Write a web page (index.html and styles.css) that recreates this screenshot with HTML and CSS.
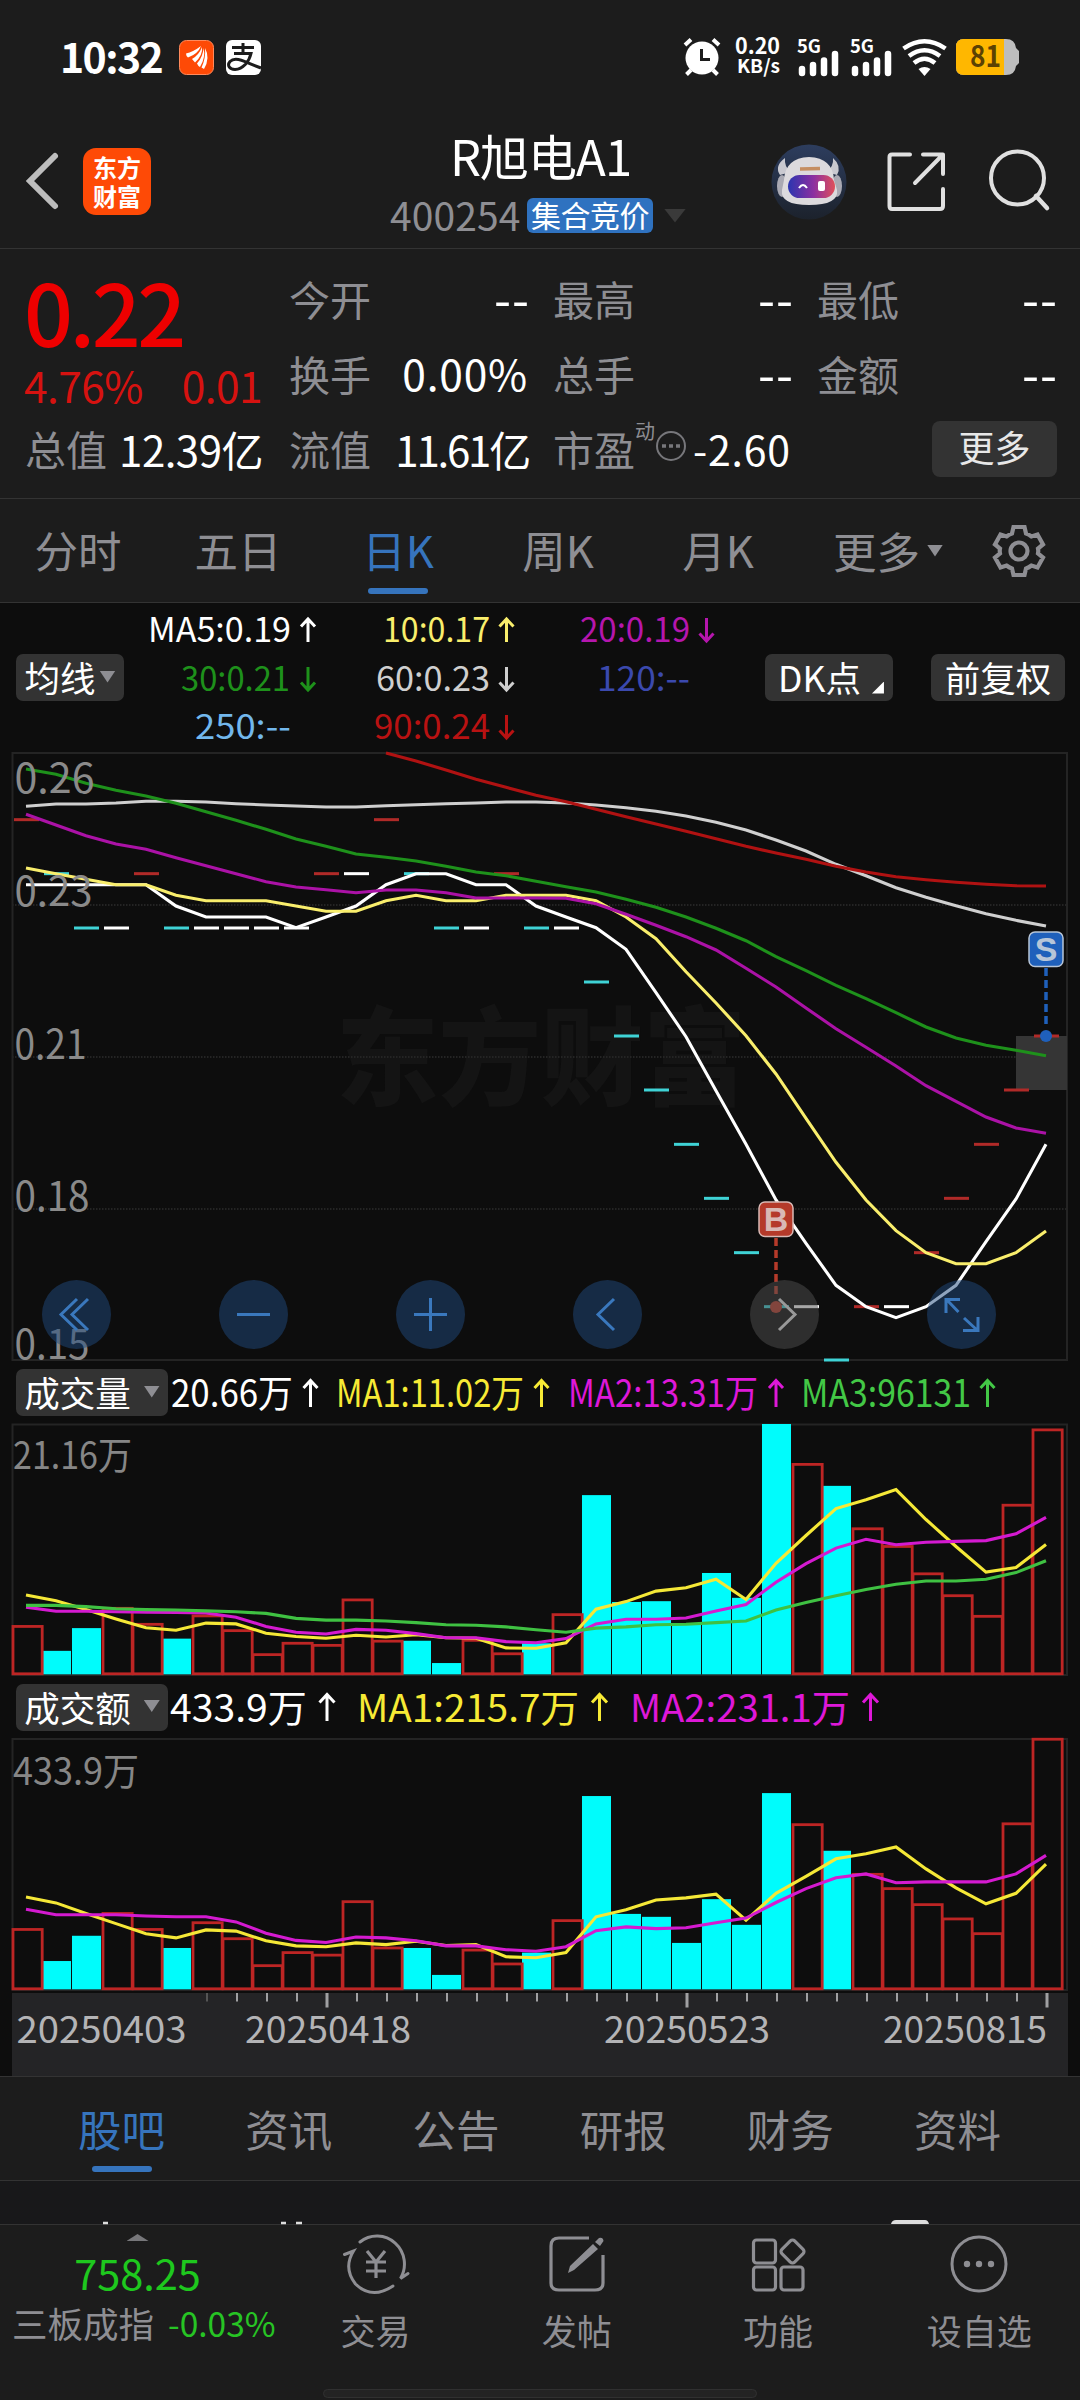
FILE: index.html
```html
<!DOCTYPE html>
<html lang="zh-CN">
<head>
<meta charset="utf-8">
<title>R旭电A1 400254</title>
<link rel="stylesheet" href="styles.css">
</head>
<body>
<div class="app">
  <div class="status">
    <span class="clock">10:32</span>
    <svg class="st-app" width="35" height="35" viewBox="0 0 35 35"><rect x=".5" y=".5" width="34" height="34" rx="7" fill="#fe4a06" stroke="#ff8a5c"/><path d="M7 13.500Q14 12 22 6Q19 14 9 17.500Q7 16 7 13.500ZM13 19Q20 15 23 7Q24 15 16 22.500ZM18 23.500Q24 17 24.500 8Q27 17 21 27Q19 26 18 23.500ZM22.500 27.500Q27 18 26 8Q31.500 18 25 29Z" fill="#fff"/></svg>
    <svg class="st-pay" width="35" height="35" viewBox="0 0 35 35"><rect width="35" height="35" rx="6" fill="#fff"/><g fill="none" stroke="#1c1c1c" stroke-width="3"><path d="M6 7.500H28M17 3V14M8 13.500H25C23 22 17 29 9 29.500C3 29.500 1 25 4 21.500C8 17.500 16 20 22 23L35 28"/></g></svg>
    <svg class="st-alarm" width="38" height="38" viewBox="0 0 38 38"><circle cx="19" cy="20" r="16.500" fill="#fff"/><path d="M2 7L8 1.500M36 7L30 1.500M8 32L3.500 36.500M30 32L34.500 36.500" stroke="#fff" stroke-width="4"/><path d="M18.500 11V21.500H27" fill="none" stroke="#1c1c1c" stroke-width="3"/></svg>
    <svg class="net" width="46" height="40" viewBox="0 0 46 40"><text x="0" y="17" font-size="22" textLength="45" lengthAdjust="spacingAndGlyphs">0.20</text><text x="2" y="36" font-size="19" textLength="43" lengthAdjust="spacingAndGlyphs">KB/s</text></svg>
    <svg class="st-sig" width="42" height="37" viewBox="0 0 42 37"><text x="0" y="13.500" textLength="24" lengthAdjust="spacingAndGlyphs">5G</text><path d="M5 30V34M16 26V34M27 21.500V34M38 15V34" stroke="#fff" stroke-width="6.500" stroke-linecap="round"/></svg>
    <svg class="st-sig2" width="42" height="37" viewBox="0 0 42 37"><text x="0" y="13.500" textLength="24" lengthAdjust="spacingAndGlyphs">5G</text><path d="M5 30V34M16 26V34M27 21.500V34M38 15V34" stroke="#fff" stroke-width="6.500" stroke-linecap="round"/></svg>
    <svg class="st-wifi" width="45" height="37" viewBox="0 0 45 37"><g fill="none" stroke="#fff" stroke-width="4.500"><path d="M1.500 9.500Q22.500-5 43.500 9.500M7 17Q22.500 5.500 38 17M12 24Q22.500 15.500 33 24"/></g><path d="M16.500 30Q22.500 26 28.500 30L22.500 37Z" fill="#fff"/></svg>
    <svg class="st-bat" width="64" height="36" viewBox="0 0 64 36"><path d="M8 0H50Q59 0 60 9L63 12V24L60 27Q59 36 50 36H8Q0 36 0 28V8Q0 0 8 0Z" fill="#bdbdbd"/><path d="M8 0H48V36H8Q0 36 0 28V8Q0 0 8 0Z" fill="#ffb700"/><text x="14" y="28" textLength="31" lengthAdjust="spacingAndGlyphs">81</text></svg>
  </div>

  <header class="head">
    <svg class="back" width="34" height="58" viewBox="0 0 34 58"><path d="M29 4L4 29L29 54" fill="none" stroke="#bdbdbd" stroke-width="6" stroke-linecap="round"/></svg>
    <div class="logo"><span>东方</span><span>财富</span></div>
    <div class="title">
      <div class="name">R旭电A1</div>
      <div class="code"><span>400254</span><b>集合竞价</b><i class="tri"></i></div>
    </div>
    <svg class="robot" width="76" height="76" viewBox="0 0 76 76">
      <defs><linearGradient id="sky" x1="0" y1="0" x2="0" y2="1"><stop offset="0" stop-color="#2d3d5e"/><stop offset="1" stop-color="#1c222c"/></linearGradient><linearGradient id="visor"><stop offset="0" stop-color="#2b35b0"/><stop offset=".55" stop-color="#8d2fa0"/><stop offset="1" stop-color="#e0505a"/></linearGradient></defs>
      <circle cx="38" cy="38" r="37.500" fill="url(#sky)"/>
      <path d="M14 14Q3 22 9 31L20 28Q13 23 14 14ZM62 14Q71 22 66 31L55 28Q63 23 62 14Z" fill="#c9c9d0"/>
      <ellipse cx="11" cy="42" rx="5" ry="11" fill="#a9a9b3"/><ellipse cx="66" cy="42" rx="5" ry="11" fill="#a9a9b3"/>
      <path d="M13 36Q14 14 38 13Q62 14 63 36L66 46Q68 61 38 61Q9 61 11 46Z" fill="#dcdadd"/>
      <path d="M29 25L49 24.500" stroke="#c58e62" stroke-width="3.500"/>
      <rect x="17" y="31" width="47" height="23" rx="11.500" fill="url(#visor)"/>
      <path d="M28 44Q32 38 36 44" fill="none" stroke="#fff" stroke-width="2"/><rect x="47" y="37" width="7" height="10" rx="2" fill="#fff"/>
    </svg>
    <svg class="share" width="60" height="62" viewBox="0 0 60 62"><path d="M24 4.500H6Q3.500 4.500 3.500 7V56Q3.500 59 6 59H54Q57 59 57 56V39M37 4.500H57V24M56 5.500L29 33" fill="none" stroke="#e0e0e0" stroke-width="4" stroke-linecap="round" stroke-linejoin="round"/></svg>
    <svg class="search" width="62" height="64" viewBox="0 0 62 64"><circle cx="29.500" cy="29" r="26.500" fill="none" stroke="#e0e0e0" stroke-width="4"/><path d="M48 47L59 59" stroke="#e0e0e0" stroke-width="4.500" stroke-linecap="round"/></svg>
  </header>

  <section class="quote">
    <div class="price">
      <div class="last">0.22</div>
      <div class="chg"><span>4.76%</span><span>0.01</span></div>
    </div>
    <div class="kv"><span>今开</span><em class="nil">--</em></div>
    <div class="kv"><span>最高</span><em class="nil">--</em></div>
    <div class="kv"><span>最低</span><em class="nil">--</em></div>
    <div class="kv"><span>换手</span><em class="pct">0.00%</em></div>
    <div class="kv"><span>总手</span><em class="nil">--</em></div>
    <div class="kv"><span>金额</span><em class="nil">--</em></div>
    <div class="kv"><span>总值</span><em>12.39亿</em></div>
    <div class="kv"><span>流值</span><em class="float">11.61亿</em></div>
    <div class="kv pe"><span>市盈</span><small>动</small><svg width="32" height="32" viewBox="0 0 32 32"><circle cx="16" cy="16" r="14" fill="none" stroke="#77777b" stroke-width="2"/><path d="M7 16h4M14 16h4M21 16h4" stroke="#77777b" stroke-width="3.500"/></svg><em>-2.60</em></div>
    <div class="kv end"><span class="more">更多</span></div>
  </section>

  <nav class="tabs">
    <span>分时</span><span>五日</span><span class="on">日K</span><span>周K</span><span>月K</span><span class="drop">更多<i class="tri"></i></span>
    <svg width="54" height="54" viewBox="0 0 54 54"><g fill="none" stroke="#8e8e93" stroke-width="4.200"><path d="M21.500 3H32.500L34 9.500Q37 10.500 39.500 12.500L45.500 10.500L51 20.500L46 24.500Q46.500 27 46 29.500L51 33.500L45.500 43.500L39.500 41.500Q37 43.500 34 44.500L32.500 51H21.500L20 44.500Q17 43.500 14.500 41.500L8.500 43.500L3 33.500L8 29.500Q7.500 27 8 24.500L3 20.500L8.500 10.500L14.500 12.500Q17 10.500 20 9.500Z"/><circle cx="27" cy="27" r="8.500"/></g></svg>
  </nav>

  <main class="chart">
    <div class="legend top">
      <span class="pill avg">均线<i class="tri"></i></span>
      <svg class="ma" width="600" height="150" viewBox="140 603 600 150">
        <g fill="#fff"><text x="148" y="642" textLength="143" lengthAdjust="spacingAndGlyphs">MA5:0.19</text><path class="up" d="M308 642V619M301 626.500L308 619L315 626.500" stroke="#fff"/></g>
        <g fill="#f9ee6c"><text x="383" y="642" textLength="107" lengthAdjust="spacingAndGlyphs">10:0.17</text><path class="up" d="M506.500 642V619M499.500 626.500L506.500 619L513.500 626.500" stroke="#f9ee6c"/></g>
        <g fill="#b516ad"><text x="580" y="642" textLength="110" lengthAdjust="spacingAndGlyphs">20:0.19</text><path class="up" d="M706.500 618V641M699.500 633.500L706.500 641L713.500 633.500" stroke="#b516ad"/></g>
        <g fill="#1e911b"><text x="181" y="691" textLength="109" lengthAdjust="spacingAndGlyphs">30:0.21</text><path class="up" d="M308 667V690M301 682.500L308 690L315 682.500" stroke="#1e911b"/></g>
        <g fill="#cfcfcf"><text x="376" y="691" textLength="114" lengthAdjust="spacingAndGlyphs">60:0.23</text><path class="up" d="M506.500 667V690M499.500 682.500L506.500 690L513.500 682.500" stroke="#cfcfcf"/></g>
        <g fill="#3b49ae"><text x="597" y="691" textLength="93" lengthAdjust="spacingAndGlyphs">120:--</text></g>
        <g fill="#72b7ec"><text x="195" y="739" textLength="96" lengthAdjust="spacingAndGlyphs">250:--</text></g>
        <g fill="#b81212"><text x="374" y="739" textLength="116" lengthAdjust="spacingAndGlyphs">90:0.24</text><path class="up" d="M506.500 715V738M499.500 730.500L506.500 738L513.500 730.500" stroke="#b81212"/></g>
      </svg>
      <span class="pill dk">DK点<i class="corner"></i></span>
      <span class="pill adj">前复权</span>
    </div>

    <div class="kwrap">
      <svg id="kline" width="1056" height="609" viewBox="12 752 1056 609">
        <text class="mark" x="336" y="1097" textLength="410" lengthAdjust="spacingAndGlyphs">东方财富</text>
        <rect x="12.500" y="753" width="1054.500" height="607" fill="none" stroke="#242424" stroke-width="2"/>
        <path d="M12 905H1067M12 1057H1067M12 1209H1067" stroke="#242424" stroke-width="2" stroke-dasharray="1.500 1.500"/>
        <rect x="1016" y="1036" width="51" height="54" fill="#353535"/>
      </svg>
      <div class="tools">
        <span><svg viewBox="0 0 69 69"><path d="M35 19L19 34.500L35 50M46 19L30 34.500L46 50"/></svg></span>
        <span><svg viewBox="0 0 69 69"><path d="M18 34.500H51"/></svg></span>
        <span><svg viewBox="0 0 69 69"><path d="M18 34.500H51M34.500 18V51"/></svg></span>
        <span><svg viewBox="0 0 69 69"><path d="M41 19L25 34.500L41 50"/></svg></span>
        <span class="off"><svg viewBox="0 0 69 69"><path d="M29 19L45 34.500L29 50"/></svg></span>
        <span><svg viewBox="0 0 69 69"><path d="M19 33V19.500H33M20 20L31.500 32M51 37V50.500H36M50 50L37 38"/></svg></span>
      </div>
    </div>

    <div class="legend">
      <span class="pill ind">成交量<i class="tri"></i></span>
      <svg class="vl" width="892" height="63" viewBox="168 1361 892 63">
        <g fill="#fff"><text x="171" y="1407" textLength="122" lengthAdjust="spacingAndGlyphs">20.66万</text><path class="up" d="M310.500 1407V1381M303.500 1388L310.500 1380.500L317.500 1388" stroke="#fff"/></g>
        <g fill="#f7ea35"><text x="336" y="1407" textLength="188" lengthAdjust="spacingAndGlyphs">MA1:11.02万</text><path class="up" d="M541.500 1407V1381M534.500 1388L541.500 1380.500L548.500 1388" stroke="#f7ea35"/></g>
        <g fill="#de18d8"><text x="568" y="1407" textLength="190" lengthAdjust="spacingAndGlyphs">MA2:13.31万</text><path class="up" d="M776 1407V1381M769 1388L776 1380.500L783 1388" stroke="#de18d8"/></g>
        <g fill="#43c846"><text x="801" y="1407" textLength="170" lengthAdjust="spacingAndGlyphs">MA3:96131</text><path class="up" d="M987.500 1407V1381M980.500 1388L987.500 1380.500L994.500 1388" stroke="#43c846"/></g>
      </svg>
    </div>
    <svg id="volume" width="1056" height="252" viewBox="12 1424 1056 252">
      <rect x="12.500" y="1424.500" width="1054.500" height="250.500" fill="none" stroke="#242424" stroke-width="2"/>
      <text class="lbl" x="13" y="1468.500" textLength="119" lengthAdjust="spacingAndGlyphs">21.16万</text>
    </svg>

    <div class="legend amt">
      <span class="pill ind">成交额<i class="tri"></i></span>
      <svg class="vl" width="892" height="62" viewBox="168 1676 892 62">
        <g fill="#fff"><text x="170" y="1721.500" textLength="137" lengthAdjust="spacingAndGlyphs">433.9万</text><path class="up" d="M327 1721V1695M319.500 1702.500L327 1694.500L334.500 1702.500" stroke="#fff"/></g>
        <g fill="#f7ea35"><text x="357" y="1721.500" textLength="222" lengthAdjust="spacingAndGlyphs">MA1:215.7万</text><path class="up" d="M599.500 1721V1695M592 1702.500L599.500 1694.500L607 1702.500" stroke="#f7ea35"/></g>
        <g fill="#de18d8"><text x="630" y="1721.500" textLength="220" lengthAdjust="spacingAndGlyphs">MA2:231.1万</text><path class="up" d="M870.500 1721V1695M863 1702.500L870.500 1694.500L878 1702.500" stroke="#de18d8"/></g>
      </svg>
    </div>
    <svg id="amount" width="1056" height="255" viewBox="12 1738 1056 255">
      <rect x="12.500" y="1739" width="1054.500" height="251" fill="none" stroke="#242424" stroke-width="2"/>
      <text class="lbl" x="13" y="1784.500" textLength="126" lengthAdjust="spacingAndGlyphs">433.9万</text>
    </svg>
    <svg id="axis" width="1056" height="83" viewBox="12 1993 1056 83">
      <rect x="12" y="1993" width="1056" height="83" fill="#242426"/>
      <g class="date"><text x="16.500" y="2042.500" textLength="170" lengthAdjust="spacingAndGlyphs">20250403</text><text x="245" y="2042.500" textLength="166" lengthAdjust="spacingAndGlyphs">20250418</text><text x="604" y="2042.500" textLength="166" lengthAdjust="spacingAndGlyphs">20250523</text><text x="883" y="2042.500" textLength="164" lengthAdjust="spacingAndGlyphs">20250815</text></g>
    </svg>
  </main>

  <nav class="tabs info"><span class="on">股吧</span><span>资讯</span><span>公告</span><span>研报</span><span>财务</span><span>资料</span></nav>
  <div class="peek"><svg width="1080" height="43" viewBox="0 0 1080 43"><path d="M103 42H108M281 42H286M296 42H302" stroke="#ddd" stroke-width="2.500"/><path d="M891 43Q892 39 896 39H925Q928 39 929 43Z" fill="#ddd"/></svg></div>

  <footer class="dock">
    <div class="index">
      <i class="tri"></i>
      <strong>758.25</strong>
      <div><span>三板成指</span><em>-0.03%</em></div>
    </div>
    <div class="act"><svg width="68" height="64" viewBox="0 0 68 64"><g fill="none" stroke="#8e8e93" stroke-width="3" stroke-linecap="round"><path d="M18 10A27.500 28 0 0 1 58.500 46.500L66 41.500M2.500 22.500L11.500 19Q1 36 13.500 52Q30 68 51 54"/><path d="M25 19L34 30L43 19M34 30V46M24 30H44M24 39H44" stroke-linecap="butt" stroke-width="3.200"/></g></svg><span>交易</span></div>
    <div class="act"><svg width="68" height="64" viewBox="0 0 68 64"><path d="M46 6H16Q8 6 8 14V51Q8 58 16 58H52Q60 58 60 51V23" fill="none" stroke="#8e8e93" stroke-width="3.200"/><path d="M25 41L27 34L50 12L55 17L31 38ZM52 10L56 6Q60 5 60.500 9L57 14Z" fill="#8e8e93"/></svg><span>发帖</span></div>
    <div class="act"><svg width="68" height="64" viewBox="0 0 68 64"><g fill="none" stroke="#8e8e93" stroke-width="3.200"><rect x="9.500" y="8" width="22" height="23" rx="3"/><rect x="9.500" y="35" width="22" height="23" rx="3"/><rect x="37" y="35" width="22" height="23" rx="3"/><rect x="39.500" y="10.500" width="18" height="18" rx="3" transform="rotate(45 48.500 19.500)"/></g></svg><span>功能</span></div>
    <div class="act"><svg width="68" height="64" viewBox="0 0 68 64"><circle cx="34" cy="32" r="27" fill="none" stroke="#8e8e93" stroke-width="3"/><g fill="#8e8e93"><circle cx="22" cy="32" r="3.200"/><circle cx="34" cy="32" r="3.200"/><circle cx="46" cy="32" r="3.200"/></g></svg><span>设自选</span></div>
    <div class="home"></div>
  </footer>
</div>
<script src="chart.js"></script>
</body>
</html>
```
FILE: styles.css
```css
* { box-sizing: border-box; }
body { margin: 0; background: #1c1c1c; }
.app {
  width: 1080px; height: 2400px; overflow: hidden;
  display: flex; flex-direction: column;
  background: #1c1c1c; color: #fff;
  font-family: "Noto Sans CJK SC", "Noto Sans", sans-serif;
  line-height: 1; white-space: nowrap;
}
.app > * { flex: none; }
svg { display: block; flex: none; overflow: visible; }
em, i, b { font-style: normal; font-weight: 400; }
.tri {
  display: block; width: 16px; height: 12px; background: #8e8e93;
  clip-path: polygon(0 0, 100% 0, 50% 100%);
}

/* status bar */
.status { height: 114px; padding: 0 60px 0 60px; display: flex; align-items: center; }
.clock { width: 119px; padding-bottom: 4px; font-size: 41px; font-weight: 700; letter-spacing: -1.600px; }
.st-pay { margin-left: 12px; }
.st-alarm { margin-left: auto; }
.net { margin-left: 14px; }
.net text { font-weight: 700; fill: #fff; }
.st-sig { margin-left: 16px; }
.st-sig2 { margin-left: 11px; }
.st-sig text, .st-sig2 text { font-size: 18px; font-weight: 700; fill: #fff; }
.st-wifi { margin-left: 10px; }
.st-bat { margin-left: 9px; }
.st-bat text { font-size: 29px; font-weight: 700; fill: #5c4203; }

/* header */
.head {
  height: 135px; border-bottom: 1px solid #333; padding: 0 27px 0 26px;
  display: flex; align-items: flex-start;
}
.back { margin-top: 38px; }
.logo {
  margin: 34px 0 0 23px; width: 68px; height: 67px; border-radius: 13px; background: #fe4a06;
  display: flex; flex-direction: column; align-items: center; justify-content: center; gap: 3px;
  font-size: 24px; font-weight: 700; line-height: 26px;
}
.title { margin-left: 239px; width: 297px; }
.name { margin-top: 11px; padding-left: 60px; font-size: 49px; line-height: 60px; letter-spacing: -1px; }
.code { margin-top: 12px; display: flex; align-items: center; height: 37px; }
.code span { width: 137px; padding-bottom: 3px; color: #8e8e93; font-size: 39px; letter-spacing: .1px; }
.code b {
  width: 126px; height: 35px; border-radius: 6px; background: #2f72c0;
  font-size: 30px; line-height: 33px; text-align: center; letter-spacing: -.5px;
}
.code .tri { margin-left: 11px; width: 22px; height: 14px; background: #3a3a3a; }
.robot { margin: 30px 0 0 84px; }
.share { margin: 36px 0 0 39px; }
.search { margin: 35px 0 0 42px; }

/* quote grid */
.quote {
  height: 250px; border-bottom: 1px solid #333; padding: 12px 26px 13px;
  display: grid; grid-template-columns: repeat(4, 236px); grid-template-rows: repeat(3, 75px); column-gap: 28px;
}
.price { grid-row: span 2; color: #ee0000; }
.last { margin: 3px 0 0 -2px; font-size: 86px; font-weight: 500; line-height: 92px; letter-spacing: -3.500px; }
.chg { margin: 5px 0 0 -2px; display: flex; justify-content: space-between; color: #d61210; font-size: 42.500px; line-height: 48px; letter-spacing: -.6px; }
.kv { display: flex; align-items: center; justify-content: space-between; }
.kv span { margin-left: -1px; color: #8e8e93; font-size: 41px; }
.kv em { font-size: 42px; letter-spacing: -.5px; margin-right: -1px; }
.kv .nil { font-size: 49px; letter-spacing: 1px; padding-bottom: 4px; margin-right: -4px; }
.kv .pct { font-size: 42.500px; letter-spacing: .8px; margin-right: -2px; }
.kv .float { letter-spacing: -2.200px; margin-right: -3px; }
.kv.pe { justify-content: flex-start; }
.pe small { font-size: 20px; color: #8e8e93; align-self: flex-start; margin-top: 10px; }
.pe svg { margin: -6px 6px 0 0; }
.kv.pe em { font-size: 41px; letter-spacing: .8px; }
.kv.end { justify-content: flex-end; }
.kv .more {
  width: 125px; height: 56px; margin: 0 -3px 0 0; border-radius: 8px; background: #333;
  color: #e8e8e8; font-size: 36px; line-height: 51px; text-align: center;
}

/* tab rows */
.tabs { height: 104px; border-bottom: 1px solid #333; display: flex; align-items: center; color: #8e8e93; font-size: 43.500px; }
.tabs span { width: 160px; height: 103px; line-height: 101px; display: flex; justify-content: center; position: relative; left: -2px; }
.tabs .on { color: #3674bd; }
.tabs .on::after {
  content: ""; position: absolute; left: 50%; bottom: 8px; width: 60px; height: 6px; margin-left: -30px;
  border-radius: 3px; background: #3674bd;
}
.tabs .drop { width: 192px; align-items: center; justify-content: flex-start; gap: 7px; padding-left: 35px; }
.info { border-top: 1px solid #333; height: 105px; padding-left: 38px; }
.info span { width: 167.200px; line-height: 104px; left: 0; }

/* charts */
.chart { height: 1473px; padding: 0 12px; background: #0d0d0d; }
.legend { height: 63px; display: flex; align-items: center; padding-left: 4px; }
.legend.amt { height: 62px; }
.legend.top { height: 149px; }
.pill {
  flex: none; height: 47px; border-radius: 7px; background: #333; color: #fff;
  font-size: 35.500px; line-height: 43px; padding-bottom: 2px; display: flex; align-items: center; justify-content: center;
}
.avg { width: 108px; gap: 4px; }
.ma { margin-left: 16px; }
.dk { width: 128px; margin-left: 25px; gap: 11px; padding-left: 4px; }
.corner { width: 12px; height: 12px; margin-top: 22px; background: #fff; clip-path: polygon(100% 0, 100% 100%, 0 100%); }
.adj { width: 134px; margin-left: 38px; }
.ind { width: 152px; gap: 13px; }
.ma text { font-size: 34.500px; }
.vl text { font-size: 37.500px; }
.up { fill: none; stroke-width: 3; }
.kwrap { position: relative; height: 609px; }
.mark { font-size: 107px; font-weight: 900; fill: #141414; }
.axis-label { font-size: 41px; fill: #8a8a8a; }
.lbl { font-size: 38px; fill: #868686; }
.date text { font-size: 37px; fill: #b4b4b6; }
.tools { position: absolute; left: 30px; top: 528px; display: flex; gap: 108px; }
.tools span { width: 69px; height: 69px; border-radius: 50%; background: rgba(32, 74, 125, .5); }
.tools svg { width: 69px; height: 69px; fill: none; stroke: #3a78bd; stroke-width: 3; }
.tools .off { background: rgba(80, 80, 80, .5); }
.tools .off svg { stroke: #999; }

.peek { height: 44px; background: #18181a; border-bottom: 1px solid #333; }

/* bottom dock */
.dock { height: 175px; display: flex; position: relative; color: #8e8e93; }
.index { width: 275px; display: flex; flex-direction: column; align-items: center; padding-top: 9px; }
.index .tri { width: 22px; height: 7px; background: #77777a; clip-path: polygon(50% 0, 100% 100%, 0 100%); }
.index strong { margin-top: 7px; font-size: 41.500px; line-height: 48px; font-weight: 400; color: #1ec81e; }
.index div { margin-top: 8px; align-self: stretch; padding: 0 0 0 12px; display: flex; align-items: center; gap: 14px; font-size: 35.500px; line-height: 38px; }
.index em { color: #27c424; font-size: 33.500px; }
.act { width: 201.250px; display: flex; flex-direction: column; align-items: center; padding-top: 7px; }
.act span { margin-top: 16px; font-size: 35px; line-height: 36px; }
.home { position: absolute; left: 323px; bottom: 2px; width: 434px; height: 9px; border-radius: 5px; background: #232323; border: 1px solid #303030; }
```
FILE: chart.js
```js
const NS = "http://www.w3.org/2000/svg";
const STEP = 30;

function add(svg, tag, attrs, text) {
  const el = document.createElementNS(NS, tag);
  for (const k in attrs) el.setAttribute(k, attrs[k]);
  if (text) el.textContent = text;
  svg.appendChild(el);
  return el;
}

function line(svg, values, color, toY, first = 0) {
  const points = values.map((v, i) => (26 + STEP * (i + first)) + "," + toY(v).toFixed(1)).join(" ");
  add(svg, "polyline", { points, fill: "none", stroke: color, "stroke-width": 3.1 });
}

// Price panel
const k = document.getElementById("kline");
const priceY = v => 600 + v / 3;
const kinds = { R: "#b02a28", C: "#3fd3d6", W: "#ffffff" };
const closes = "R659 C821 C984 W984 R821 C984 W984 W984 W984 W984 R821 W821 R659 C821 C984 W984 R821 C984 W984 C1146 C1308 C1470 C1633 C1795 C1958 C2120 W2120 C2280 R2120 W2120 R1958 R1795 R1633 R1470 R1308".split(" ");
closes.forEach((c, i) => {
  add(k, "rect", { x: 14 + STEP * i, y: priceY(+c.slice(1)) - 1.5, width: 25, height: 3, fill: kinds[c[0]] });
});

line(k, [619,612,612,609,604,604,606,611,615,618,621,621,617,614,611,609,606,606,609,615,623,634,648,667,690,720,753,793,827,863,892,917,941,961,978], "#cfcfcf", priceY);
line(k, [854,854,854,854,854,918,951,951,951,983,951,918,854,821,821,854,854,918,951,983,1048,1178,1310,1472,1633,1800,1930,2056,2120,2153,2120,2056,1925,1797,1633], "#ffffff", priceY);
line(k, [804,821,838,854,854,886,902,902,902,918,934,934,902,886,902,902,886,886,886,902,951,1016,1115,1209,1307,1422,1555,1687,1800,1892,1958,1991,1991,1958,1893], "#f9ee6c", priceY);
line(k, [643,675,707,732,748,773,797,821,845,861,869,878,870,870,878,894,894,894,895,911,943,976,1010,1050,1105,1161,1224,1286,1342,1398,1457,1504,1551,1584,1600], "#ab12a6", priceY);
line(k, [507,523,550,571,588,610,635,661,688,717,739,762,772,783,799,816,827,844,860,876,898,922,951,985,1022,1070,1112,1156,1196,1238,1281,1314,1336,1351,1367], "#1e911b", priceY);
line(k, [459,483,510,538,562,586,605,628,650,672,694,716,739,759,778,799,816,830,839,847,853,857,858], "#b01212", priceY, 12);

[["0.26", 793, 80], ["0.23", 906, 78], ["0.21", 1059, 72], ["0.18", 1210.5, 75], ["0.15", 1359, 75]].forEach(([t, y, w]) => {
  add(k, "text", { x: 14.5, y, class: "axis-label", textLength: w, lengthAdjust: "spacingAndGlyphs" }, t);
});

function badge(letter, x, top, from, to, dot, fill, edge) {
  add(k, "path", { d: `M${x} ${from}V${to}`, stroke: fill, "stroke-width": 3.5, "stroke-dasharray": "8 4" });
  add(k, "circle", { cx: x, cy: dot, r: 6, fill });
  add(k, "rect", { x: x - 17, y: top, width: 34, height: 34.5, rx: 6, fill, stroke: edge, "stroke-width": 1.5 });
  add(k, "text", { x, y: top + 29, "text-anchor": "middle", "font-size": 34, "font-weight": 700, "font-family": "Liberation Sans, sans-serif", fill: edge }, letter);
}
badge("S", 1046, 932, 968, 1026, 1036, "#1f60bb", "#b7c5d8");
badge("B", 776, 1202, 1238, 1296, 1307, "#b53a2a", "#d9b9b5");

// Volume and turnover panels
const barY = v => 1400 + v / 2.376;
function bars(svg, list, base) {
  const items = list.split(" ");
  for (const kind of ["C", "R"]) {
    items.forEach((b, i) => {
      if (b[0] !== kind) return;
      const x = 12 + STEP * i, y = barY(+b.slice(1));
      if (kind === "C") add(svg, "rect", { x, y, width: 29, height: base - y, fill: "#00fcfc" });
      else add(svg, "rect", { x: x + 1, y, width: 29.2, height: base - y - .5, fill: "none", stroke: "#bd2524", "stroke-width": 2.8 });
    });
  }
}

const vol = document.getElementById("volume");
bars(vol, "R538 C596 C542 R495 R533 C567 R513 R548 R605 R578 R583 R475 R573 C572 C625 R571 R603 C578 R510 C226 C480 C478 C533 C411 C470 C57 R153 C204 R306 R348 R413 R465 R514 R250 R71", 1674.3);
line(vol, [463,477,498,520,541,547,530,532,554,562,566,559,563,558,565,566,589,590,577,497,479,454,446,426,474,388,322,258,237,213,284,348,409,398,343], "#f5e837", barY);
line(vol, [492,502,502,503,504,505,506,516,538,552,556,545,547,555,565,565,574,577,567,532,521,521,518,501,486,433,389,352,331,344,338,336,334,318,279], "#d41ad0", barY);
line(vol, [488,488,491,496,498,499,501,503,507,519,523,523,525,529,534,535,539,546,552,542,539,534,533,529,525,499,481,465,450,438,430,430,426,410,382], "#3fc142", barY);

const amt = document.getElementById("amount");
bars(amt, "R1258 C1333 C1273 R1220 R1258 C1302 R1242 R1280 R1344 R1313 R1319 R1192 R1302 C1302 C1366 R1307 R1340 C1313 R1237 C941 C1221 C1228 C1290 C1186 C1247 C934 R1009 C1071 R1127 R1161 R1199 R1233 R1268 R1007 R806", 1989.3);
line(amt, [1181,1195,1220,1244,1268,1278,1259,1262,1285,1297,1299,1290,1294,1286,1296,1294,1323,1325,1313,1228,1211,1188,1183,1174,1236,1172,1132,1090,1078,1062,1114,1159,1197,1172,1103], "#f5e837", barY);
line(amt, [1210,1223,1223,1223,1226,1228,1228,1240,1267,1284,1289,1276,1278,1285,1297,1297,1306,1310,1299,1261,1252,1256,1254,1242,1231,1194,1161,1135,1126,1147,1145,1145,1145,1126,1082], "#d41ad0", barY);

// Date ticks
const axis = document.getElementById("axis");
for (let i = 6; i < 35; i++) {
  const major = i % 12 === 10;
  add(axis, "rect", { x: 27 + STEP * i - (major ? 1.5 : 1), y: 1993, width: major ? 3 : 2, height: major ? 14.5 : 8.5, fill: i === 6 ? "#555" : "#a0a0a2" });
}
```
